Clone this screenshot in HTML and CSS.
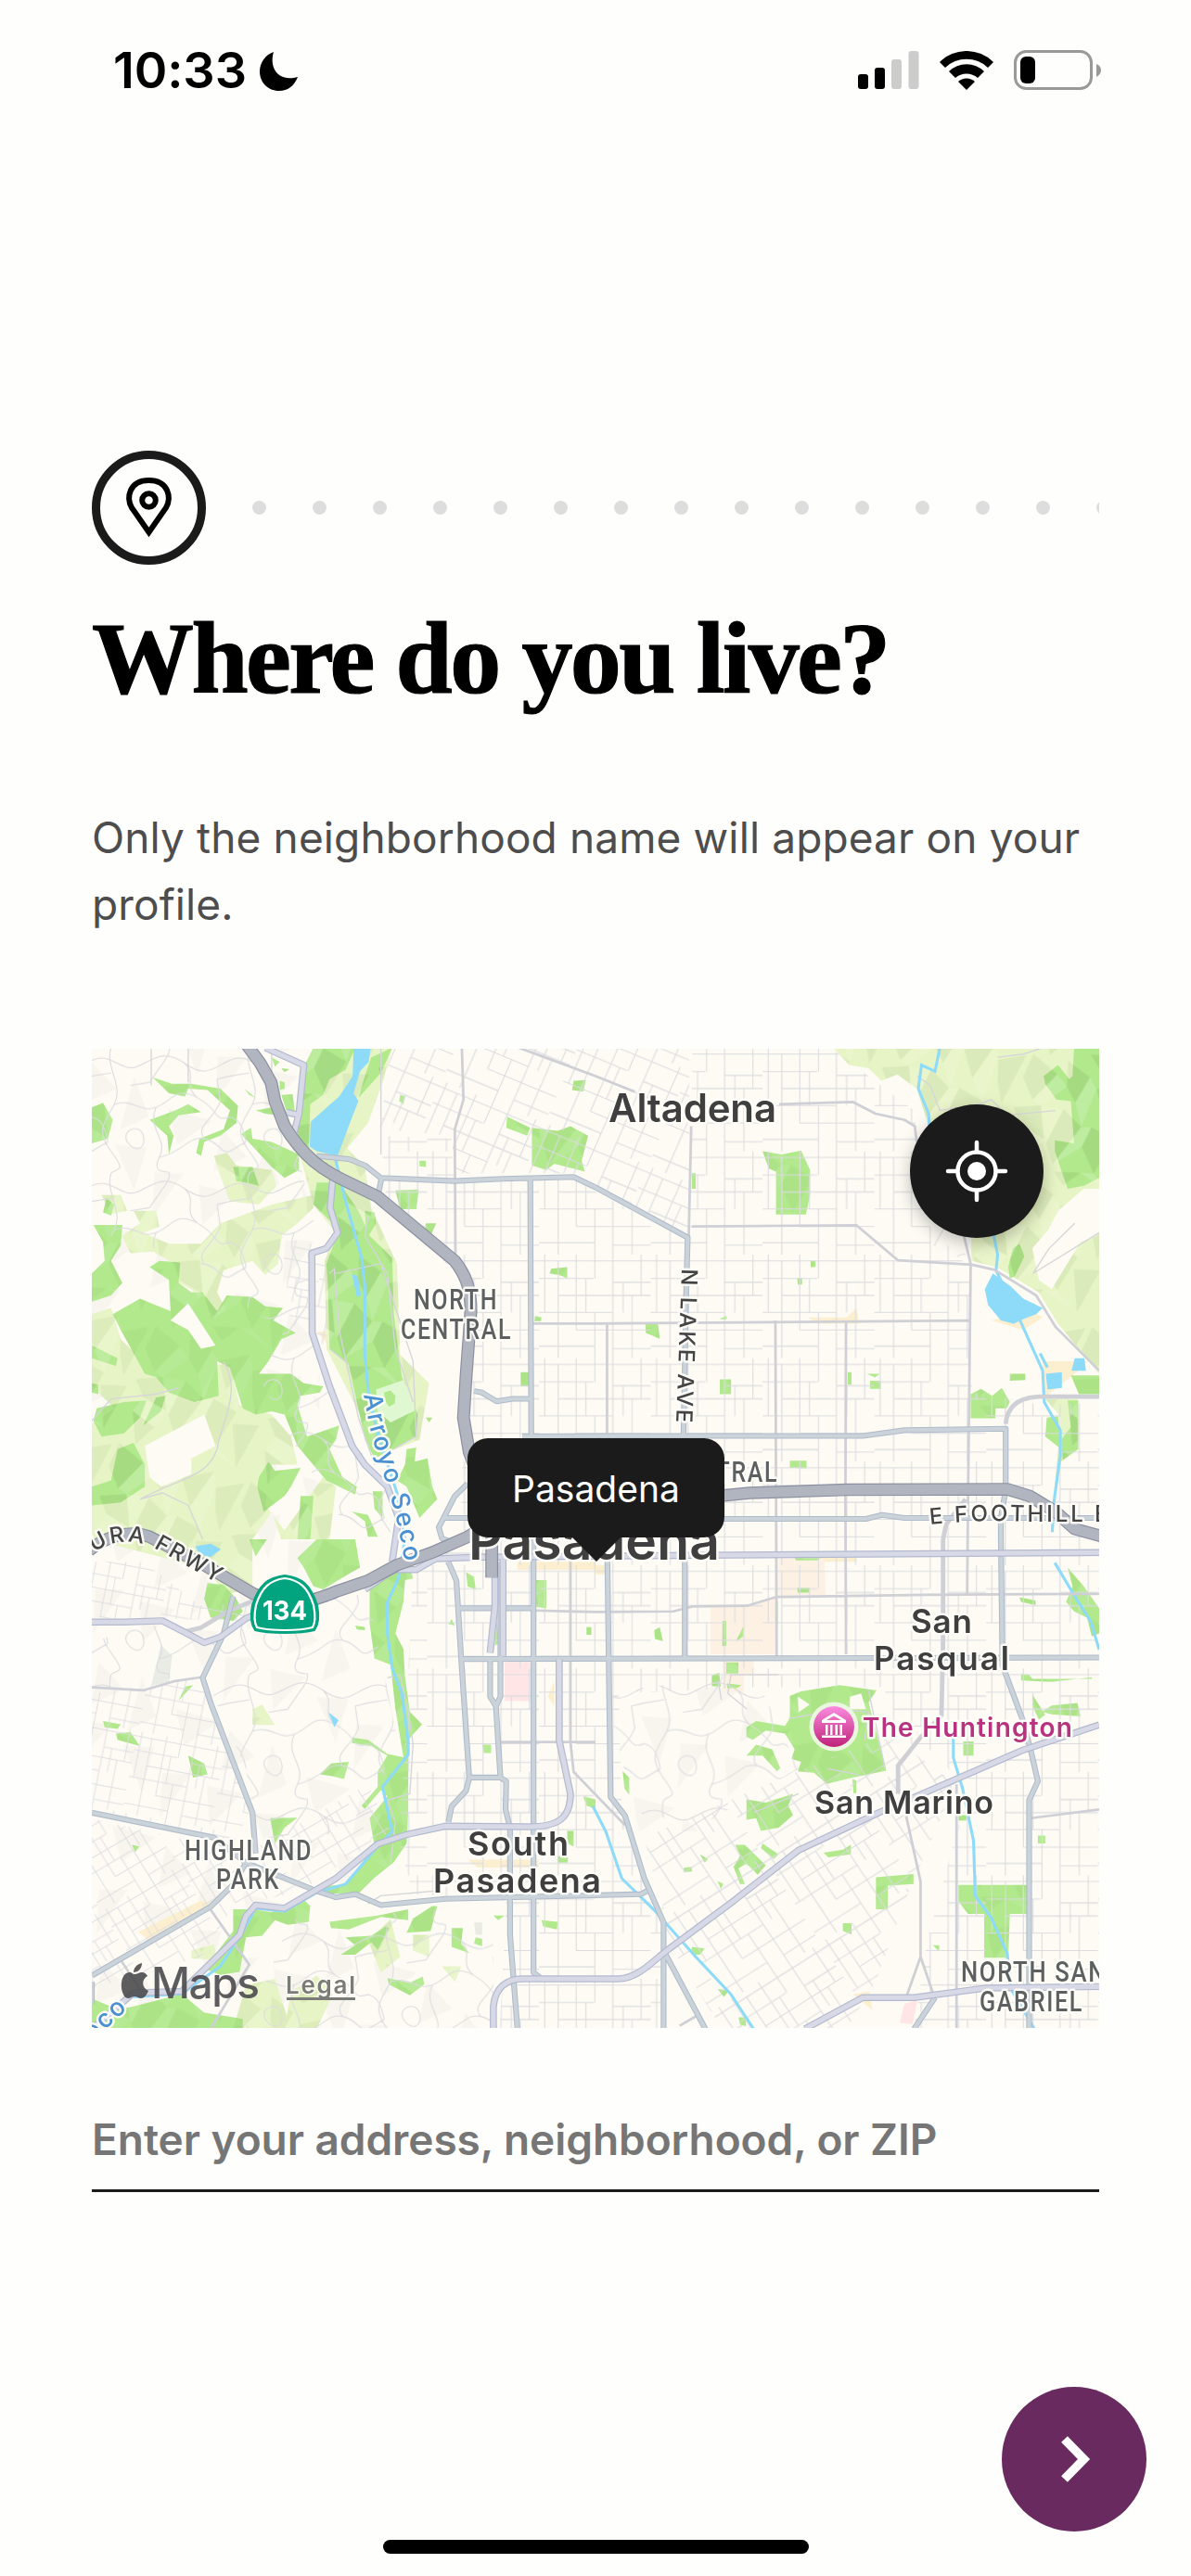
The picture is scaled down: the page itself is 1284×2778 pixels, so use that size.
FILE: index.html
```html
<!DOCTYPE html>
<html lang="en">
<head>
<meta charset="utf-8">
<title>Where do you live?</title>
<link rel="stylesheet" href="styles.css">
</head>
<body>
<div class="screen">
  <header class="status">
    <div class="status-left">
      <span class="time">10:33</span>
      <svg class="moon" width="42" height="42" viewBox="0 0 42 42"><path d="M15 0C10 16 19 33 41 27C37 37 30 42 21 42C9 42 0 33 0 21C0 12 6 3 15 0Z"/></svg>
    </div>
    <div class="status-right">
      <svg width="66" height="42" viewBox="0 0 66 42"><rect x="0" y="25" width="11" height="16" rx="3"/><rect x="18" y="18" width="11" height="23" rx="3"/><rect class="off" x="36" y="9" width="11" height="32" rx="3"/><rect class="off" x="54.500" y="0" width="11" height="41" rx="3"/></svg>
      <svg width="58" height="42" viewBox="0 0 58 42"><path d="M0 12A41 41 0 0 1 58 12L52 18A33 33 0 0 0 6 18Z"/><path d="M10 22A27 27 0 0 1 48 22L41 29A18 18 0 0 0 17 29Z"/><path d="M20 33A13 13 0 0 1 38 33L29 42Z"/></svg>
      <svg width="95" height="44" viewBox="0 0 95 44"><rect class="shell" x="1.500" y="1.500" width="82" height="40" rx="12"/><rect x="7" y="7" width="16" height="29" rx="6"/><path class="nub" d="M89 15Q94 17 94 21.500Q94 26 89 29Z"/></svg>
    </div>
  </header>

  <main class="content">
    <div class="steps">
      <div class="step-icon">
        <svg width="105" height="105" viewBox="9 9 105 105"><path d="M61.500 88L43 61.500C37 51 40 32 61.500 32C83 32 86 51 80 61.500Z"/><circle cx="61.500" cy="53.500" r="7.300"/></svg>
      </div>
      <div class="dots"><i></i><i></i><i></i><i></i><i></i><i></i><i></i><i></i><i></i><i></i><i></i><i></i><i></i><i></i><i></i></div>
    </div>
    <h1>Where do you live?</h1>
    <p class="lead">Only the neighborhood name will appear on your profile.</p>

    <section class="map">
      <svg class="terrain" viewBox="0 3 3136 3124" preserveAspectRatio="none">
        <defs>
          <pattern id="streets" width="348" height="330" patternUnits="userSpaceOnUse">
            <path class="street" d="M0 20H348M0 76H170M230 88H348M60 130H348M0 184H230M116 240H348M0 292H174M230 300H348M18 0V184M60 20V330M116 0V240M146 76V184M174 0V76M174 184V330M230 0V330M262 88V184M290 130V330M318 0V130"/>
          </pattern>
          <pattern id="streetsNE" href="#streets" patternTransform="rotate(23)"/>
          <pattern id="streetsTilt" href="#streets" patternTransform="rotate(11) scale(.8)"/>
          <pattern id="streetsSW" href="#streets" patternTransform="rotate(-31) scale(.8)"/>
          <pattern id="streetsSM" href="#streets" patternTransform="rotate(-33)"/>
          <pattern id="lanes" width="430" height="400" patternUnits="userSpaceOnUse">
            <path class="street" d="M0 40C60 10 90 80 140 60S220 0 290 50S380 60 430 40M60 0C40 60 100 120 70 180S10 260 60 330S80 380 60 400M70 180C130 160 150 210 200 190S260 120 330 160S380 240 430 220M0 220C30 230 40 250 50 300M200 190C170 260 240 290 210 350S250 390 240 400M210 350C290 330 300 280 350 290S400 340 430 330M0 330L50 300M290 50C330 90 280 120 330 160M240 0C250 20 210 60 180 110L120 120M350 290C320 250 380 230 400 170L390 100L430 90M0 90L60 80M110 300C90 260 150 240 160 280S140 340 110 300Z"/>
          </pattern>
          <pattern id="relief" width="430" height="390" patternUnits="userSpaceOnUse" patternTransform="rotate(17)">
            <path class="shade" d="M20 10L110 50L60 150L10 90ZM130 0L210 30L190 120L150 80ZM240 60L330 10L290 140ZM350 60L430 20L400 190L370 130ZM10 190L90 160L130 260L50 240ZM160 150L230 190L180 330L140 270ZM260 180L340 200L310 320L250 250ZM340 240L420 220L390 370ZM30 290L110 320L70 390ZM190 350L270 330L230 385Z"/>
            <path class="shine" d="M110 50L150 80L90 160L60 150ZM210 30L240 60L230 190L190 120ZM330 10L350 60L340 200L290 140ZM90 160L160 150L140 270L130 260ZM230 190L260 180L250 250L180 330ZM50 240L130 260L110 320L30 290ZM310 320L390 370L270 330Z"/>
          </pattern>
          <pattern id="softRelief" width="460" height="420" patternUnits="userSpaceOnUse" patternTransform="rotate(28)">
            <path class="haze" d="M20 40L130 80L60 170ZM160 20L260 110L200 190ZM300 60L440 30L380 150ZM40 230L150 200L110 340ZM210 240L300 200L330 340ZM360 260L440 220L420 390Z"/>
          </pattern>
          <g id="grass">
            <path d="M690 0H935L905 110L860 240L795 320L850 380L870 510L950 690L960 980L1050 1070L1020 1250L935 1285L900 1310L840 1180L730 960L725 680L760 590L690 500L650 350L640 270L665 60Z"/>
            <path d="M380 345L420 335L450 375L560 390L575 440L520 500L430 490L400 410ZM690 470L690 510L640 560L590 600L580 690L540 725L500 680L410 710L390 780L420 840L390 870L310 770L270 750L260 690L190 650L120 655L95 600L150 560L130 520L200 520L210 570L160 590L240 625L340 625L400 560L560 500ZM0 850L60 830L90 930L180 1020L240 1100L330 1130L390 1010L430 1010L460 1140L560 1170L620 1240L640 1330L560 1330L540 1460L600 1540L720 1370L760 1400L740 1568H590L560 1480L500 1568L500 1730L420 1740L350 1660L0 1568V1200L70 1150L0 1080ZM30 470L90 470L110 520L60 530Z"/>
            <path d="M500 2110L530 2095L570 2160L500 2160ZM310 2880L380 2860L390 2910L310 2905ZM480 2990L570 2970L620 3130H440ZM620 3010L700 2960L750 3020L700 3130H600ZM860 2850L930 2780L960 2900L900 2950ZM1000 2830L1050 2830V2900L1000 2880ZM1090 2930L1150 2930L1130 2980Z"/>
          </g>
          <g id="grassEast">
            <path d="M740 0H1568V450L1520 450L1440 520L1410 580L1360 640L1380 740L1420 770L1510 620L1560 600L1568 590V1040L1440 880L1380 780L1250 700L1170 680V600L1040 260L1000 130L940 85L890 105L850 65L790 55ZM1400 1120H1500V1280L1450 1320L1425 1450L1450 1180Z"/>
          </g>
          <g id="woods">
            <path d="M690 0H820L790 70L740 100L720 150L680 180L675 330L640 280L660 60ZM870 30L935 0L900 80L830 160L850 90ZM700 430L770 430L830 520L865 600L935 670L940 850L965 1050L1015 1170L1010 1240L940 1280L880 1310L850 1250L800 1010L740 960L735 760L730 690L770 580L690 500ZM850 520L880 525L885 560L855 610Z"/>
            <path d="M190 95L250 115L310 115L400 130L455 185L450 240L400 280L350 300L340 345L325 335L335 290L410 260L430 200L360 135L300 130L290 155L240 145ZM180 230L260 200L300 180L340 205L270 215L240 250L255 280L240 340L235 280ZM0 190L35 175L65 230L50 290L0 305ZM465 275L495 255L500 290L560 300L645 340V390L600 415L560 380ZM560 30L585 45L570 60ZM590 65L615 68L600 78ZM585 105L600 110V130L585 135ZM590 150L625 148L632 205L605 200ZM440 380L500 380L520 440L480 430L450 425ZM510 200L560 190L580 215L540 210ZM475 130L510 160L490 150ZM45 480L70 500L60 535L35 525Z"/>
            <path d="M5 565L95 565L90 630L60 680L95 750L60 790L0 810V720L40 680L35 620ZM210 680L275 685L270 750L310 780L345 780L390 840L420 790L500 795L540 825L595 830L565 870L635 910L590 930L550 1000L520 1040L620 1040L660 1070L720 1080L710 1100L650 1110L640 1140L670 1240L770 1205L760 1250L740 1280L780 1370L825 1400L820 1425L770 1400L730 1380L640 1270L600 1170L560 1160L510 1170L470 1150L430 1020L390 1000L395 1110L320 1130L240 1100L200 1050L165 1040L90 900L65 850L150 800L245 840L240 740L180 700ZM0 950L80 990L75 1015L0 990ZM0 1070L20 1075V1105L0 1100ZM15 1150L100 1130L170 1125L150 1180L100 1230L30 1240L5 1190ZM200 1115L230 1110L215 1160L160 1205ZM80 1280L130 1260L165 1330V1400L90 1450L0 1460V1400L60 1380ZM520 1370L550 1320L570 1350L650 1340L620 1400L600 1430L535 1480L515 1400ZM650 1430H690L680 1568H640ZM810 1480L860 1490L890 1560H860L850 1510ZM875 1415H905V1500L880 1470ZM950 1380L975 1330L980 1280L1010 1275L1005 1320L1045 1310L1060 1400L1075 1440L1020 1500L980 1400ZM1040 1180H1060L1050 1195ZM1335 1035H1360V1080L1335 1080ZM945 455L1018 452L1010 515H960ZM1040 560H1072L1055 600L1035 590ZM1020 360H1040V380L1020 378ZM960 150L975 155L970 180L957 170ZM1293 220L1365 255L1355 280L1290 255ZM1370 255L1450 265L1490 250L1545 280L1525 360L1535 395L1440 370L1415 390L1370 375ZM1500 105L1538 103L1530 140L1495 135ZM1430 705L1480 700V735L1455 725L1425 720ZM1380 855L1400 860L1398 872L1378 872Z"/>
            <g transform="translate(0 1568)"><path d="M640 60L700 0H820L835 90L800 110L720 160L690 150L660 90ZM490 0H545L510 55ZM360 140L410 145L450 190L470 230L440 260L370 250L350 190ZM865 150L945 100L990 90L1000 125L975 130L970 200L945 300L970 350L975 440L990 550L1028 590L985 640L985 860L980 970L940 1030L880 1080L830 1130L740 1130L700 1110L790 1100L880 980L865 890L920 820L900 800L850 860L840 850L890 790V740L920 690L870 660L810 650V632L860 640L920 685L970 695L945 540L930 400L880 380L865 270ZM555 890L640 888L600 920L570 970ZM710 750L745 715L800 710L785 765L745 755ZM300 690L350 715L360 750L315 760ZM75 620L120 615L150 660L80 640ZM35 580L90 590L80 605L40 600ZM440 1180L500 1180L560 1190L660 1150L680 1170L675 1220L610 1230L570 1215L530 1265L480 1270L460 1380L400 1390L350 1370L440 1250ZM740 1220L890 1200L985 1180V1215L900 1205L800 1245L745 1240ZM1000 1210L1060 1170L1075 1170L1055 1250L980 1255ZM790 1270L870 1265L915 1235L925 1240L890 1310L870 1285L820 1325L775 1325L820 1295ZM1120 1240H1155L1150 1290L1175 1320L1120 1300ZM1195 1270L1215 1275V1298L1190 1290ZM1250 1200H1285L1265 1215ZM1400 1215L1450 1220L1448 1245L1405 1235ZM920 1400L990 1415L1030 1395L1035 1420L990 1455L925 1420ZM0 1465L80 1500L130 1490L280 1450L350 1510L470 1530V1562H0ZM1380 130H1415V220L1380 215ZM1165 105L1190 120L1195 160L1170 150ZM1120 255L1130 275L1110 270ZM1260 255L1268 330L1255 340ZM1480 930H1500V980L1480 970ZM1450 1010H1482V1032H1450ZM1530 820L1568 830V860L1540 850ZM1540 280H1555V305H1540ZM1215 655H1243V682H1220ZM820 275L850 280V290L825 288ZM125 975L148 980L135 998ZM290 470L315 465L270 515Z"/></g>
            <g transform="translate(1568 0)"><path d="M520 330L580 340L640 328L668 390V470L655 532H562V395L540 385ZM1490 0H1568V415L1520 440L1470 450L1430 330V295L1490 305L1480 170L1435 165L1400 115L1395 90L1440 55L1475 100L1485 90ZM1480 1045L1568 1045V1105H1505ZM1168 1105L1200 1088L1235 1110L1265 1085L1290 1130L1280 1150H1245V1182H1168ZM1405 1180L1440 1175L1450 1280L1400 1240ZM1470 1125H1503V1280L1455 1315L1450 1250L1480 1210ZM1285 700L1300 640L1320 625L1335 665L1305 730L1290 735ZM1290 1040H1338V1060L1290 1062ZM855 1062H888V1088H855ZM845 1040H885L870 1052ZM785 1035H797V1075H785ZM155 880L195 882L200 928L157 910ZM387 1058H422V1105H387ZM605 1317H657V1342L605 1340ZM628 735H643V755H630ZM670 680H685V700H670ZM300 400H312V450H300ZM385 865L408 855V866Z"/></g>
            <g transform="translate(1568 1568)"><path d="M605 500L640 485L760 465L875 482L850 520L860 560L905 738L800 760L720 780L680 745L630 740L640 710L610 700L620 670L590 620L530 610L490 640L470 630V600L500 580L590 595L605 570ZM470 690L500 655L550 670L575 730L565 740L520 690ZM470 830L530 840L615 812L600 850L615 880L570 920L515 930L500 890L470 895ZM1130 1103H1345V1195L1290 1195L1285 1335H1210V1195L1160 1195L1130 1155ZM873 1078L990 1068V1100L910 1105V1180H873ZM1470 90L1520 150L1568 220V300L1545 310L1530 250L1490 230L1465 200L1485 150ZM1390 550L1420 530L1500 522L1510 565L1420 558ZM1360 495L1400 560L1380 575L1360 530ZM1325 430L1350 432L1360 445H1545V440L1420 455L1325 450ZM435 975H465L530 1040L505 1070L470 1035L445 1050L465 1100L450 1100L430 1045L450 1010ZM520 970L570 1005L555 1020L515 985ZM710 1000L770 990L795 975L795 1005L725 1015ZM407 393H445V428H407ZM410 460L455 465L440 475H410ZM362 435L385 425L390 470L362 468ZM183 290L200 280L210 325L185 318ZM395 260H407V340H395ZM460 278V310L438 325ZM560 200H567V270H560ZM620 60H700L690 67H625ZM628 155H666V170H630ZM85 740L105 760V815L90 795ZM770 1225H797V1260L770 1250ZM1377 945H1400V970H1377ZM1145 645H1177V690L1145 690ZM800 765L812 770V810H803ZM1130 880H1155V897H1130ZM300 1300L340 1305L325 1325H300ZM275 1048L300 1045V1060L275 1062ZM325 1005L350 1020L340 1032ZM380 1090L398 1100L390 1115ZM380 1435L415 1440L400 1460ZM445 1525H468V1553L450 1548ZM1320 185L1370 195V210L1325 200ZM1050 1295H1070V1315Z"/></g>
          </g>
          <g id="majorLines">
            <path d="M700 345L800 355L850 375L900 415L1130 425L1280 418L1500 412L1568 445L1855 605L1850 800L1842 1235M890 475L902 415M1365 420L1368 1235M1190 1095L1215 1100L1260 1128L1310 1120H1368M1340 1240L1568 1238H2400L2530 1220L2845 1215V1410L2830 1500V1568L2835 1970L2900 2150L2925 2250L2945 2340L2918 2400V3130M1960 1503H2410L2460 1490L2530 1500H3136M1170 1390L1130 1430L1080 1530L1090 1565L1130 1580M1090 1500H1180"/>
            <path d="M1110 1640L1135 1700L1150 1950L1175 2330L1165 2370L1120 2420L1110 2470M1145 1788H1370M1150 1950L3136 1945M1375 1568V2950L1400 2970M1272 1640V2070L1258 2100L1240 2070V1950M1258 2100L1272 2328H1175M1272 2328L1290 2340L1288 2430L1302 2490V2830L1325 3130M440 1750L410 1870L345 2010L370 2090L500 2440L510 2570M0 2440L380 2520L480 2600L700 2690L760 2710L820 2700L900 2735L1100 2715L1710 2700L1728 2690M0 2960L370 2740L440 2670L480 2600M0 3050V2980M1605 1630L1615 2390L1660 2450L1720 2650L1780 2790V3130M1846 1620V1950M1780 2880L1910 3130M2625 3030L2560 3130"/>
          </g>
          <g id="arterialLines">
            <path d="M540 0L660 55L645 210L630 270M605 205L645 215M750 420L742 510L765 590L730 640L685 655L686 910L740 1080L810 1270L850 1330L920 1400L955 1500L935 1640M0 1832H100L220 1828L290 1865L350 1898L400 1880L480 1820L560 1790M850 1728L940 1665H1010L1070 1630L1200 1625L2000 1618L3136 1610M1255 1690V1780L1240 1930M1455 1950V2210L1490 2380C1490 2460 1450 2485 1360 2485L1100 2483L980 2510L890 2540L760 2650L650 2715L600 2745L510 2735L480 2770L460 2830L280 3010L130 3015L0 3130M1250 3130V3060C1255 3000 1290 2970 1340 2970H1640C1700 2970 1750 2910 1790 2880L2000 2720L2200 2560L2450 2440L2900 2240L3136 2160M2220 3130L2400 3030H2560L2780 3000L3136 2995M1280 1620V1940"/>
          </g>
          <g id="freewayLines">
            <path d="M475 -20L525 50L558 110L570 170L600 250C660 350 720 390 780 420L890 475L1130 680C1160 720 1180 760 1180 840L1165 1050L1157 1180L1175 1290L1200 1360L1245 1440V1690"/>
            <path d="M-10 1605C40 1560 120 1535 180 1560L350 1650L500 1740C600 1790 680 1770 760 1735L860 1700L950 1650L1060 1610L1170 1560L1300 1480L1500 1440L1968 1428L2048 1420L2350 1410L2850 1408L2920 1430L3000 1480L3060 1535L3150 1560"/>
          </g>
        </defs>
        <rect class="land" x="0" y="0" width="3136" height="3140"/>
        <path fill="url(#softRelief)" d="M0 0H640V400L720 600L700 1568L950 2300L900 2700L1200 3130H0ZM1650 2100L2100 2000V2500H1700Z"/>
        <g class="built">
          <path class="sand" d="M700 905H755L770 970H755ZM1325 1640H1568V1665H1325ZM2230 860H2350L2380 830L2390 880H2260ZM1568 1650H1600V1680H1568ZM2240 1625H2380V1640H2240ZM145 2820L340 2720L370 2730L180 2850ZM1170 2590H1390V2615H1200ZM1420 2070L1440 2020V2100ZM2370 3020L2420 3010L2430 3070ZM2800 870L2930 840L2960 860L2900 900ZM2960 1000H3100L3060 1040L2960 1120Z"/>
          <path class="campus" d="M2138 1630H2280L2285 1748H2138ZM1926 1780L2060 1780L2130 1755V1935H1926ZM1964 1955H2060V1995L2030 2000V2055H1964Z"/>
          <path class="clinic" d="M1285 1960H1365V2084H1285ZM2530 3050L2570 3038L2555 3115L2515 3110Z"/>
          <path class="lot" d="M215 1905L250 1940L240 2025L185 2035ZM1190 2790H1215V2830H1195Z"/>
        </g>
        <use class="grass" href="#grass"/>
        <use class="grass" href="#grassEast" x="1568"/>
        <use class="woods" href="#woods"/>
        <use fill="url(#relief)" href="#grass" opacity=".7"/>
        <use fill="url(#relief)" href="#grassEast" x="1568" opacity=".8"/>
        <use fill="url(#relief)" href="#woods" opacity=".5"/>
        <path class="mint" d="M885 1090L970 1060L1010 1155L930 1195L890 1160Z"/>
        <path class="woods" d="M910 1100L930 1093L945 1110L943 1135L925 1145L912 1125Z"/>
        <path class="land" d="M165 1270L350 1170L385 1270L310 1310V1360L215 1400L180 1370ZM245 870L300 815L385 950L340 960L300 900ZM2198 2070L2235 2095L2200 2120ZM2360 2070L2395 2060L2410 2110L2360 2110Z"/>

        <g>
          <path fill="url(#lanes)" d="M0 0H480L560 200L640 330L700 600L690 900L820 1260L930 1420V1568L800 1540L640 1280L520 1050L600 900L420 790L300 640L100 640L0 540ZM0 1900L160 1830L350 1900L500 1800L860 1740L950 2200L860 2480L520 2560L480 2300L340 1980L160 2040H0ZM620 2780L1250 2740V3130H480ZM1600 2060L2060 1990L2200 2300L1900 2480L1690 2440ZM2600 460L2720 620L2720 680L2560 600Z"/>
          <path fill="url(#streetsNE)" d="M920 60L940 0H1860V600L1500 400L1130 400L1120 280L900 260Z"/>
          <path fill="url(#streets)" d="M900 280L1120 290L1130 430L1500 420L1860 620L1870 0H2300L2560 200L2600 560L2730 700L2740 1100L2960 1140L3136 1130V3130H2560L2600 2850L2720 2400L2640 2250L2480 2200L2470 2040L2050 2040L1640 2060L1650 2440L1780 2800V3130H1270L1290 2720L1000 2700L960 2550L1000 1660L1150 1560L1160 740L920 520Z"/>
          <path fill="url(#streetsTilt)" d="M0 2060L340 2010L490 2440L440 2540L0 2440ZM0 1640H160L340 1780L500 1770L480 1830L200 1820H0ZM590 600L730 640V960L690 920L620 880Z"/>
          <path fill="url(#streetsSW)" d="M0 2460L480 2570L860 2350L930 2500L650 2690L440 2740L340 2900L0 3000Z"/>
          <path fill="url(#streetsSM)" d="M1720 2520L2100 2350L2480 2190L2690 2350L2540 2700L2440 2980L2350 3130H1960L1800 2860Z"/>
        </g>
        <g class="lanes">
          <path d="M900 340V0M560 150V0M185 0V120M300 0V110M0 1190L60 1120L200 1105L270 1085M410 1000C470 1100 400 1200 390 1280C360 1370 280 1370 150 1440L220 1420L300 1460L345 1568M760 720L900 688L1000 1000L1010 1240L940 1280M860 540L850 600L920 720L945 960L1000 1130M740 720L755 705L770 900L830 1180L880 1330M740 960L800 1010"/>
          <path d="M2138 2000H1990L1980 2060L2040 2110M1950 2020L1960 2080M2170 2140L2330 2110L2420 2120L2405 2210M2418 2050L2470 2300M2290 2300L2390 2320M2060 2440L2200 2380"/>
          <path d="M920 2010L960 2000L985 2120L1000 2220L990 2380L920 2400L945 2470L930 2600M1070 2690L900 2705L860 2730M2570 90L2610 120L2640 200L2760 180L2800 165L2850 215L3000 200M2820 30L2900 20L2960 0M3136 590L2930 720L2980 640L3060 560"/>
        </g>

        <g class="water">
          <path d="M815 0H868L862 45L835 75L815 145L830 170L805 235L780 305L765 345L700 330L678 315L682 235L770 155L812 90ZM810 722L828 728L838 790L825 795ZM322 1590L370 1582L402 1600L370 1625L335 1615ZM737 2120L768 2145L755 2168ZM2805 720L2860 760L2900 800L2960 830L2940 850L2900 865L2870 880L2830 870L2790 820L2780 770ZM2970 1040L3020 1035V1085L2975 1090ZM3060 990H3090L3095 1030L3050 1030Z"/>
          <path class="stream" d="M755 340L790 490L840 670L850 760V980L862 1110L890 1230L950 1420L975 1568L955 1690L920 1770V1868L935 1978L965 2058L985 2210V2255L905 2358L935 2500L890 2548L790 2668L700 2695L600 2755L510 2745L470 2820L400 2930L280 3018L130 3028"/>
          <path class="stream" d="M2640 0L2625 75L2583 55L2573 130L2605 210L2608 270M2808 600L2820 660L2815 710L2890 870L2960 1030L2965 1130L3015 1220V1300L2995 1450L2990 1545M2952 975L2975 1020M2998 1643L3060 1750L3110 1830L3136 1920M1560 2420L1600 2500L1650 2650L1750 2750L1880 2900L1990 3020L2060 3130M2682 2200V2265L2710 2360L2745 2530L2750 2705L2800 2775L2850 2890L2860 3000L2940 3140"/>
        </g>

        <g class="minor">
          <path d="M1152 0L1157 165L1130 260L1132 680M1330 0L1568 90L1690 140M1370 880H1568L2730 870M1866 250L1858 610M1868 570L2380 566L2510 678L2740 692L2810 708L2940 790L3000 890L3136 1030M2140 180L2370 173L2440 210L2530 230L2562 250L2568 300M2715 600L2736 690L2728 1410L2725 1740M1604 880V1230M2128 870L2132 1940M2348 870L2346 1440L2348 1935M1270 2215H1568M1490 1620V2215L1500 2310L1660 2480M1380 1795L1568 1800L1810 1798L1870 1782L2040 1780L2130 1752L2600 1745L3136 1742M2692 2350V3130M2535 2450L2580 2660V2900L2535 3030M2580 2900L2620 3020M2920 2458L3136 2430M0 2040L160 2050L260 2020L340 2008M90 2910L160 3020M370 2750L490 2925L370 3130M1830 3120L1880 3090"/>
          <path class="wide" d="M2650 1568V1900L2645 2130L2580 2200L2510 2290V2380M3136 1113H2950C2890 1115 2850 1140 2845 1200M2720 1440L2660 1520L2650 1568M280 1865L340 1850L420 1800L500 1765"/>
        </g>
        <use class="major-case" href="#majorLines"/>
        <use class="major" href="#majorLines"/>
        <use class="arterial-case" href="#arterialLines"/>
        <use class="arterial" href="#arterialLines"/>
        <use class="freeway-case" href="#freewayLines"/>
        <use class="freeway" href="#freewayLines"/>
      </svg>

      <svg class="labels" viewBox="0 0 1086 1056">
        <defs>
          <path id="pArroyo" d="M293 373L300 410L307 436L318 470L327 500L333 530L339 562"/>
          <path id="pLake" d="M636 237L630 405"/>
          <path id="pFrwy" d="M2 543C24 528 48 529 72 541L142 580"/>
          <path id="pFoot" d="M904 513Q950 508 1000 509.500H1120"/>
          <linearGradient id="pink" x2="0" y2="1"><stop offset="0" stop-color="#fb8bdf"/><stop offset="1" stop-color="#bf2379"/></linearGradient>
        </defs>
        <text class="town" x="557" y="78.500" font-size="42" textLength="181">Altadena</text>
        <g class="district">
          <text x="347" y="281" textLength="91" lengthAdjust="spacingAndGlyphs">NORTH</text>
          <text x="333" y="313" textLength="120" lengthAdjust="spacingAndGlyphs">CENTRAL</text>
          <text x="620" y="467" textLength="120" lengthAdjust="spacingAndGlyphs">CENTRAL</text>
          <text x="100" y="875" textLength="138" lengthAdjust="spacingAndGlyphs">HIGHLAND</text>
          <text x="134" y="906" textLength="69" lengthAdjust="spacingAndGlyphs">PARK</text>
          <text x="937" y="1006" textLength="157" lengthAdjust="spacingAndGlyphs">NORTH SAN</text>
          <text x="957" y="1038" textLength="112" lengthAdjust="spacingAndGlyphs">GABRIEL</text>
        </g>
        <g class="river">
          <text><textPath href="#pArroyo" textLength="188">Arroyo Seco</textPath></text>
          <text transform="translate(40 1034) rotate(-43)" text-anchor="end">Seco</text>
        </g>
        <g class="road">
          <text><textPath href="#pLake" textLength="166">N LAKE AVE</textPath></text>
          <text><textPath href="#pFrwy" textLength="146">URA FRWY</textPath></text>
          <text><textPath href="#pFoot" textLength="193">E FOOTHILL B</textPath></text>
        </g>
        <text class="town" x="406" y="551" font-size="57" textLength="271">Pasadena</text>
        <g class="town" font-size="35">
          <text x="883" y="629.500" textLength="66">San</text>
          <text x="843" y="669.500" textLength="146">Pasqual</text>
          <text x="779" y="825" font-size="34" textLength="193">San Marino</text>
          <text x="405" y="870" font-size="36" textLength="109">South</text>
          <text x="368" y="909.500" font-size="36" textLength="181">Pasadena</text>
        </g>
        <path class="shield" d="M208 568C226 570 236 578 243 600C245 610 245 620 240 627C225 631 191 631 176 627C171 620 171 610 173 600C180 578 190 570 208 568Z"/>
        <path class="shield-line" d="M208 571C224 573 233 581 239 600C241 610 241 619 238 624C224 628 192 628 178 624C175 619 175 610 177 600C183 581 192 573 208 571Z"/>
        <text class="shield-no" x="184" y="615.500" textLength="48" lengthAdjust="spacingAndGlyphs">134</text>
        <circle class="poi-ring" cx="800" cy="731" r="26.500"/>
        <circle fill="url(#pink)" cx="800" cy="731" r="22"/>
        <path class="poi-icon" fill-rule="evenodd" d="M800 716L813 724V727H787V724ZM800 719.500L792 724H808ZM791 729H793.500V740H791ZM796 729H798.500V740H796ZM801.500 729H804V740H801.500ZM806.500 729H809V740H806.500ZM787 740.500H813V743H787Z"/>
        <text class="poi" x="831" y="742" textLength="226">The Huntington</text>
        <path class="apple" d="M54 986C54 992 50 996 45 996C45 991 49 987 54 986ZM46 998C49 998 51 996 54 996C57 996 59 998 60 1000C53 1004 54 1013 61 1016C59 1021 56 1024 53 1024C50 1024 49 1022 46 1022C43 1022 42 1024 39 1024C34 1024 31 1014 32 1007C33 999 37 996 41 996C43 996 44 998 46 998Z"/>
        <text class="brand" x="64" y="1023.500" textLength="117">Maps</text>
        <text class="legal" x="209" y="1019" textLength="75">Legal</text>
        <path class="legal-line" d="M210 1024.500H284"/>
      </svg>

      <button class="locate" aria-label="Use my location">
        <svg width="70" height="70" viewBox="-35 -35 70 70"><circle class="ring" r="20.500"/><circle class="core" r="10"/><path class="ring" d="M0 -22V-31M0 22V31M-22 0H-31M22 0H31"/></svg>
      </button>
      <div class="callout">Pasadena</div>
    </section>

    <div class="field">Enter your address, neighborhood, or ZIP</div>
  </main>

  <footer class="footer">
    <button class="next" aria-label="Next"><svg width="60" height="60" viewBox="-30 -30 60 60"><path d="M-10.500 -21.500L10.500 0L-10.500 21.500"/></svg></button>
    <div class="home-bar"></div>
  </footer>
</div>
</body>
</html>
```
FILE: styles.css
```css
* { box-sizing: border-box; }
body { margin: 0; background: #fefefd; font-family: Inter, "Liberation Sans", sans-serif; color: #000; }
.screen { width: 1284px; height: 2778px; display: flex; flex-direction: column; overflow: hidden; }
button { border: 0; padding: 0; display: flex; align-items: center; justify-content: center; border-radius: 50%; }
svg { display: block; }

.status { height: 152px; flex: none; padding: 0 96px 0 122px; display: flex; justify-content: space-between; align-items: center; }
.status-left { display: flex; align-items: center; gap: 14px; }
.time { font-size: 54px; font-weight: 600; letter-spacing: -0.1px; line-height: 60px; }
.moon { position: relative; top: 1px; }
.status-right { display: flex; align-items: center; gap: 22px; }
.off { fill: #ccc; }
.shell { fill: none; stroke: #999; stroke-width: 3; }
.nub { fill: #999; }

.content { padding: 334px 99px 0; flex: 1; }
.steps { display: flex; align-items: center; gap: 50px; overflow: hidden; }
.step-icon { width: 123px; height: 123px; flex: none; border: 9px solid #1b1b1b; border-radius: 50%; }
.step-icon svg { fill: none; stroke: #000; stroke-width: 6; }
.dots { display: flex; gap: 50px; overflow: hidden; flex: 1; }
.dots i { width: 15px; height: 15px; flex: none; border-radius: 50%; background: #ddd; }

h1 { margin: 41px 0 0; font: bold 110px/120px "Liberation Serif", serif; letter-spacing: -2.6px; white-space: nowrap; -webkit-text-stroke: 1.2px #000; }
.lead { margin: 97px 0 0; font-size: 46px; line-height: 72px; letter-spacing: 0.12px; color: #4d4d4d; }

.map { position: relative; height: 1056px; margin-top: 120px; overflow: hidden; }
.terrain, .labels { position: absolute; inset: 0; width: 1086px; height: 1056px; }
.land { fill: #fdfbf4; }
.haze { fill: #9a9a80; opacity: .06; }
.shade { fill: #5a8040; opacity: .1; }
.shine { fill: #fff; opacity: .14; }
.grass { fill: #e7f4c5; }
.woods { fill: #b1e98c; }
.sand { fill: #fcefcf; }
.campus { fill: #fcf1e2; }
.clinic { fill: #ffe5e6; }
.mint { fill: #dff8d2; }
.lot { fill: #e9ebe5; }
.street { fill: none; stroke: #dcdce0; stroke-width: 3.2; }
.lanes { fill: none; stroke: #d6d6da; stroke-width: 4; }
.water { fill: #8edbf9; }
.stream { fill: none; stroke: #8edbf9; stroke-width: 9; }
.minor { fill: none; stroke: #cfcfd6; stroke-width: 8; stroke-linejoin: round; }
.wide { stroke-width: 14; }
.major, .major-case, .arterial, .arterial-case, .freeway, .freeway-case { fill: none; stroke-linejoin: round; }
.major-case { stroke: #b0bbca; stroke-width: 18; }
.major { stroke: #cad3d9; stroke-width: 12; }
.arterial-case { stroke: #b3b9cf; stroke-width: 22; }
.arterial { stroke: #d7d9e6; stroke-width: 15; }
.freeway-case { stroke: #8b90a0; stroke-width: 40; }
.freeway { stroke: #b1b5c0; stroke-width: 33; }

.labels text { stroke: #fffefa; stroke-opacity: .9; stroke-width: 5px; paint-order: stroke; stroke-linejoin: round; }
.town { fill: #3f3f3f; font-weight: 600; }
.district { fill: #5d6060; font: 500 31px Roboto, sans-serif; letter-spacing: 2px; }
.river { fill: #4a90d2; font-size: 27px; font-weight: 500; letter-spacing: 2px; }
.road { fill: #444; font-size: 24px; font-weight: 500; }
.shield { fill: #02a37f; stroke: #02a37f; stroke-width: 2; }
.shield-line { fill: none; stroke: #fff; stroke-width: 2.2; }
.labels .shield-no { fill: #fff; stroke: none; font-size: 29px; font-weight: 700; }
.poi-ring { fill: #f2f7e9; opacity: .9; }
.poi-icon { fill: #fff; }
.poi { fill: #b8327f; font-size: 28px; font-weight: 600; }
.apple { fill: #4b4b4e; opacity: .9; }
.labels .brand { fill: #4b4b4e; opacity: .9; font-size: 46px; font-weight: 500; stroke: none; }
.labels .legal { fill: #7b7b78; font-size: 26px; font-weight: 600; stroke-width: 3px; }
.legal-line { stroke: #7b7b78; stroke-width: 3; }

.locate { position: absolute; left: 882px; top: 60px; width: 144px; height: 144px; background: #1b1b1b; box-shadow: 0 6px 18px rgba(0, 0, 0, .25); }
.ring { fill: none; stroke: #fff; stroke-width: 4.5; stroke-linecap: round; }
.core { fill: #fff; }
.callout { position: absolute; left: 405px; top: 420px; width: 277px; height: 107px; border-radius: 22px; background: #1b1b1b; color: #fff; font-size: 39px; line-height: 110px; text-align: center; }
.callout::after { content: ""; position: absolute; left: 50%; top: 106px; margin-left: -27px; border: 27px solid transparent; border-top-color: #1b1b1b; border-bottom: 0; }

.field { height: 177px; padding-top: 84px; border-bottom: 3px solid #1b1b1b; font-size: 46px; font-weight: 600; letter-spacing: -0.06px; line-height: 72px; color: #767676; white-space: nowrap; }

.footer { height: 204px; flex: none; display: flex; flex-direction: column; align-items: center; gap: 9px; }
.next { width: 156px; height: 156px; align-self: flex-end; margin-right: 48px; background: #682a5f; flex: none; }
.next path { fill: none; stroke: #fff; stroke-width: 9.500; }
.home-bar { width: 459px; height: 15px; border-radius: 8px; background: #000; }
```
